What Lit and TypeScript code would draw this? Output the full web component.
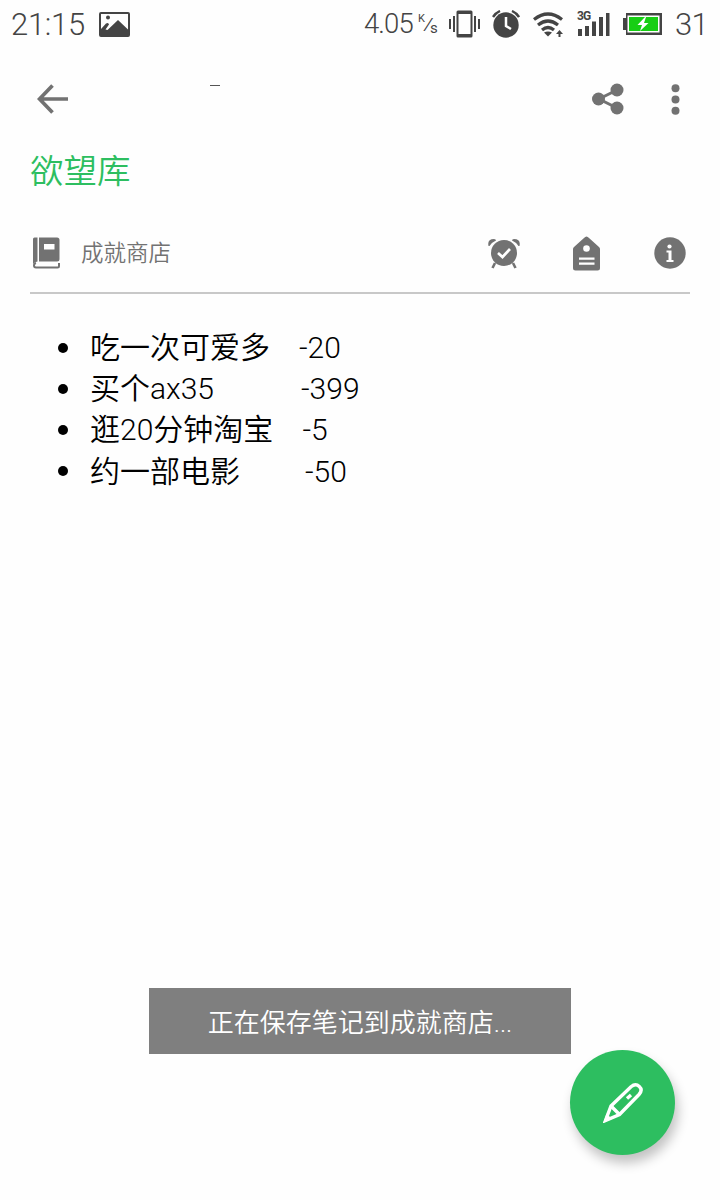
import { LitElement, html, css } from "lit";
import { customElement } from "lit/decorators.js";

interface Wish { name: string; cost: string; gap: number; }

const WISHES: Wish[] = [
  { name: "吃一次可爱多", cost: "-20", gap: 209 },
  { name: "买个ax35", cost: "-399", gap: 211 },
  { name: "逛20分钟淘宝", cost: "-5", gap: 212.5 },
  { name: "约一部电影", cost: "-50", gap: 215 },
];

@customElement("status-bar")
class StatusBar extends LitElement {
  static styles = css`
    :host { display: flex; align-items: center; height: 48px; padding-left: 11px; color: #444;
      font: 300 31px/48px Roboto, sans-serif; white-space: nowrap; box-sizing: border-box; }
    svg { display: block; flex: none; fill: #444; }
    .time { width: 88px; padding-top: 2px; letter-spacing: -0.3px; }
    .grow { flex: 1; }
    .speed { width: 54px; font-size: 27.5px; letter-spacing: -0.9px; }
    .unit { display: flex; width: 19px; height: 22px; margin-right: 12px; line-height: 11px; font-weight: 400; }
    .k { font-size: 11px; width: 7px; }
    .slash { width: 5px; font-size: 17px; line-height: 22px; transform: skewX(-14deg); }
    .s { font-size: 15px; width: 8px; padding-top: 10px; }
    .vibrate { margin-right: 12px; }
    .alarm { margin-right: 13px; }
    .wifi { margin-right: 13px; }
    .signal { display: flex; width: 34px; height: 27px; margin-right: 12px; }
    .gen { font: 700 12px/10px Roboto, sans-serif; width: 14px; letter-spacing: -0.8px; }
    .bars { margin-left: -14px; }
    .level { width: 45px; margin-left: 13px; padding-top: 2px; letter-spacing: -0.7px; }
  `;
  render() {
    return html`
      <span class="time">21:15</span>
      <svg width="31" height="25" viewBox="0 0 31 25"><path fill-rule="evenodd" d="M2 0H29Q31 0 31 2V23Q31 25 29 25H2Q0 25 0 23V2Q0 0 2 0ZM2 2V17L7 11.500Q9.500 10 10 12.500L6.500 17.500L8.500 18L19 8L29 17.500V2ZM9 3.500A2 2 0 1 1 9 7.500A2 2 0 1 1 9 3.500Z"/></svg>
      <span class="grow"></span>
      <span class="speed">4.05</span>
      <span class="unit"><span class="k">K</span><span class="slash">/</span><span class="s">s</span></span>
      <svg class="vibrate" width="31" height="28" viewBox="0 0 31 28"><path fill-rule="evenodd" d="M9 .5H22Q23.500 .5 23.500 2V26Q23.500 27.500 22 27.500H9Q7.500 27.500 7.500 26V2Q7.500 .5 9 .5ZM9.500 4V24H21.500V4ZM4 6H6V22H4ZM0 9H2V19H0ZM25 6H27V22H25ZM29 9H31V19H29Z"/></svg>
      <svg class="alarm" width="28" height="28" viewBox="0 0 28 28"><circle cx="14" cy="15" r="12.700"/><path d="M1 7Q3.500 3 8 1M20 1Q24.500 3 27 7" fill="none" stroke="#444" stroke-width="2.400"/><path d="M14 7V16L19 19" fill="none" stroke="#fff" stroke-width="2.500"/></svg>
      <svg class="wifi" width="31" height="25" viewBox="0 0 31 25"><g fill="none" stroke="#444" stroke-width="3.200"><path d="M1 7.500Q15 -3.500 29 7.500M5 13Q15 5 25 13M9 18Q15 13 21 18"/></g><path d="M11 20.500Q15 18.500 19 20.500L15 24.500ZM25.500 25V22H23L26.500 18L30 22H27.500V25Z"/></svg>
      <span class="signal"><span class="gen">3G</span>
        <svg class="bars" width="33" height="27" viewBox="0 0 33 27"><path d="M1 18H5V25H1ZM8 15H12V25H8ZM15 10.500H19V25H15ZM22 6H26V25H22ZM29 2H32.500V25H29Z"/></svg></span>
      <svg width="39" height="24" viewBox="0 0 39 24"><path d="M3 1H39V23H3V18H0V6H3Z"/><path fill="#fff" d="M4.500 3.500H36.500V20.500H4.500Z"/><path fill="#17ce14" d="M6 5H35V19H6Z"/><path fill="#fff" d="M22 5L14.500 13H19L17 19L25.500 11H21L23 5Z"/></svg>
      <span class="level">31</span>`;
  }
}

@customElement("note-header")
class NoteHeader extends LitElement {
  static styles = css`
    :host { display: block; font-family: Roboto, "Noto Sans CJK SC", sans-serif; color: #727272; }
    svg { display: block; fill: #727272; flex: none; }
    .bar { display: flex; height: 102px; box-sizing: border-box; align-items: center; padding: 0 40.5px 0 37px; }
    .dash { width: 10px; height: 1px; background: #555; margin: 0 auto 28px 142px; }
    .share { margin-right: 46.5px; }
    h1 { margin: 0; padding: 1px 0 0 30px; height: 50px; box-sizing: border-box; font: 350 33.5px/42px Roboto, "Noto Sans CJK SC", sans-serif; color: #2dbe60; }
    .meta { display: flex; align-items: center; height: 80px; margin: 14px 30px 0; border-bottom: 2px solid #c8c8c8; box-sizing: border-box; }
    .book { margin: 0 21px 0 3px; }
    .name { flex: 1; font-size: 22.5px; font-weight: 350; padding-bottom: 4px; }
    .alarm { margin-right: 53px; }
    .tag { margin-right: 54px; }
    .info { margin-right: 4px; }
  `;
  render() {
    return html`
      <div class="bar">
        <svg width="31" height="30" viewBox="0 0 31 30"><path d="M15.500 1.500L2.500 15L15.500 28.500M2.500 15H31" fill="none" stroke="#727272" stroke-width="3.700"/></svg>
        <span class="dash"></span>
        <svg class="share" width="32" height="32" viewBox="0 0 32 32"><path d="M25 7L7 16L25 25" fill="none" stroke="#727272" stroke-width="3"/><circle cx="6.500" cy="16" r="6.500"/><circle cx="25" cy="7" r="6.500"/><circle cx="25" cy="25" r="6.500"/></svg>
        <svg width="9" height="31" viewBox="0 0 9 31"><circle cx="4.500" cy="4.300" r="4"/><circle cx="4.500" cy="15.500" r="4"/><circle cx="4.500" cy="26.700" r="4"/></svg>
      </div>
      <h1>欲望库</h1>
      <div class="meta">
        <svg class="book" width="27" height="32" viewBox="0 0 27 32"><path d="M0 2Q0 .5 1.500 .5H4.500V24.500Q2 24.500 0 27Z"/><path fill-rule="evenodd" d="M6 .5H24Q26.500 .5 26.500 3V22Q26.500 24.500 24 24.500H6ZM11 7V12.500H21.500V7Z"/><path d="M26 26V29Q26 30.500 24.500 30.500H3Q1 30.500 1 28.500T3 26" fill="none" stroke="#727272" stroke-width="2"/></svg>
        <span class="name">成就商店</span>
        <svg class="alarm" width="32" height="31" viewBox="0 0 32 31"><circle cx="16" cy="15" r="13"/><path d="M.5 8Q-1 1 6 1Q8 1 8 2.500Q3.500 4.500 1.500 8ZM31.500 8Q33 1 26 1Q24 1 24 2.500Q28.500 4.500 30.500 8Z"/><path d="M7 25L4.500 30M25 25L27.500 30" stroke="#727272" stroke-width="2.600"/><path d="M10 15L14.500 19L22 11" fill="none" stroke="#fff" stroke-width="2.700"/></svg>
        <svg class="tag" width="27" height="35" viewBox="0 0 27 35"><path d="M11 2Q13.500 -1 16 2L26 11Q27 12 27 13V32Q27 34.500 24.500 34.500H2.500Q0 34.500 0 32V13Q0 12 1 11Z"/><path fill="#fff" d="M6 21.500H21.500V23.700H6ZM6 26.500H21.500V28.700H6Z"/><circle cx="13.500" cy="12.500" r="3.300" fill="#fff"/></svg>
        <svg class="info" width="32" height="32" viewBox="0 0 32 32"><circle cx="16" cy="16" r="15.700"/><circle cx="15.500" cy="9.500" r="2.100" fill="#fff"/><path fill="#fff" d="M12.500 13.500H17.500V23H19.500V25H12.500V23H14.500V15.500H12.500Z"/></svg>
      </div>`;
  }
}

@customElement("app-root")
class AppRoot extends LitElement {
  static styles = css`
    :host { display: block; position: relative; height: 1200px; overflow: hidden; background: #fefefe; }
    ul { list-style: none; margin: 0; padding: 33px 0 0 58px; color: #000;
      font: 350 30px/41.2px Roboto, "Noto Sans CJK SC", sans-serif; }
    li { display: flex; align-items: center; height: 41.2px; white-space: nowrap; }
    .dot { width: 10px; height: 10px; border-radius: 50%; background: #000; margin: 0 22px 0 0; }
    .latin { font-weight: 300; }
    .toast { position: absolute; left: 149px; top: 988px; width: 422px; height: 66px; box-sizing: border-box; padding-top: 2px; background: #7f7f7f; color: #fff;
      font: 350 26px/66px Roboto, "Noto Sans CJK SC", sans-serif; text-align: center; }
    .fab { position: absolute; left: 570px; top: 1050px; width: 105px; height: 105px; padding: 0; border: 0; border-radius: 50%;
      background: #2dbe60; box-shadow: 3px 8px 12px rgba(0, 0, 0, .24); display: grid; place-items: center; }
    .fab svg { display: block; }
  `;
  render() {
    return html`
      <status-bar></status-bar>
      <note-header></note-header>
      <ul>${WISHES.map(w => html`<li><span class="dot"></span><span style="width:${w.gap}px">${w.name}</span><span class="latin">${w.cost}</span></li>`)}</ul>
      <div class="toast">正在保存笔记到成就商店...</div>
      <button class="fab" aria-label="编辑">
        <svg width="40" height="40" viewBox="0 0 40 40" fill="none" stroke="#fff" stroke-width="3.400"><path d="M2.500 37.500L8 23L28 3.800Q32.500 0 36.300 3.500T36 11.500L16.500 31.500Z"/><path d="M8 23L16.500 31.500M24 15.500L28 12"/><path d="M.5 39.500L3.500 30.500L9 36Z" fill="#fff" stroke="none"/></svg>
      </button>`;
  }
}
